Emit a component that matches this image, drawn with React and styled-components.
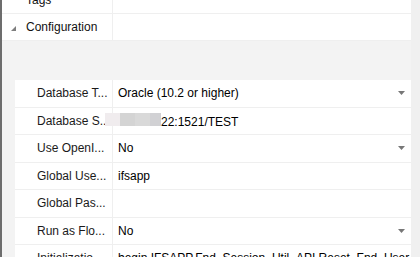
import React from 'react'
import styled, { createGlobalStyle } from 'styled-components'

const GlobalStyle = createGlobalStyle`
  html, body {
    margin: 0;
    padding: 0;
    background: #ffffff;
    overflow: hidden;
  }
  body {
    font-family: "Liberation Sans", Arial, sans-serif;
    font-size: 12px;
    color: #000;
  }
`

const Page = styled.div`
  display: flex;
  width: 420px;
  height: 257px;
  overflow: hidden;
`

const Grid = styled.div`
  flex: 1;
  min-width: 0;
  border-left: 2px solid #6d6d6d;
  background: #f3f3f3;
  overflow: hidden;
  white-space: nowrap;
`

// the grid is scrolled down a little, so the first row is cut off at the top
const Scrolled = styled.div`
  margin-top: -13px;
`

const ScrollTrack = styled.div`
  width: 9px;
  background: #f0f0f0;
`

const CategoryRow = styled.div`
  display: grid;
  grid-template-columns: 111px 1fr;
  height: 27px;
  background: #fff;
  border-bottom: 1px solid #efefef;
  box-sizing: border-box;
`

const CategoryName = styled.div`
  display: flex;
  align-items: center;
  gap: 10px;
  padding-left: 9px;
  border-right: 1px solid #efefef;
  color: #111;
`

const Expander = styled.span`
  display: inline-flex;
  width: 5px;
  height: 5px;
  margin-top: 2px;
  visibility: ${p => (p.$hidden ? 'hidden' : 'visible')};
`

const Gap = styled.div`
  height: 39px;
`

const PropertyList = styled.div`
  padding-left: 13px;
`

const PropRow = styled.div`
  display: grid;
  grid-template-columns: 98px 1fr;
  height: 27.5px;
  background: #fff;
  border-bottom: 1px solid #efefef;
  box-sizing: border-box;
`

const Label = styled.div`
  display: flex;
  align-items: center;
  padding-left: 22px;
  border-right: 1px solid #efefef;
  color: #1a1a1a;
  overflow: hidden;
`

const Value = styled.div`
  display: flex;
  align-items: center;
  justify-content: space-between;
  padding: 0 6px 0 5px;
  color: #000;
`

const Arrow = styled.svg`
  flex: none;
  width: 7px;
  height: 4px;
`

const Redacted = styled.span`
  display: inline-flex;
  height: 13px;
  margin-left: -13px;
  margin-top: 1px;
`

const Block = styled.span`
  width: ${p => p.$w}px;
  background: ${p => p.$c};
`

const Triangle = () => (
  <svg width="5" height="5" viewBox="0 0 5 5">
    <polygon points="5,0 5,5 0,5" fill="#7e7e7e" />
  </svg>
)

const DropArrow = () => (
  <Arrow viewBox="0 0 7 4">
    <polygon points="0,0 7,0 3.5,4" fill="#777" />
  </Arrow>
)

const properties = [
  { label: 'Database T...', value: 'Oracle (10.2 or higher)', combo: true },
  { label: 'Database S...', value: '22:1521/TEST', masked: true },
  { label: 'Use OpenI...', value: 'No', combo: true },
  { label: 'Global Use...', value: 'ifsapp' },
  { label: 'Global Pas...', value: '' },
  { label: 'Run as Flo...', value: 'No', combo: true },
  { label: 'Initializatio...', value: 'begin IFSAPP.Fnd_Session_Util_API.Reset_Fnd_User_;IFSAPP.Fnd_Session_API' },
]

const maskBlocks = [
  { w: 15, c: '#f0ecee' },
  { w: 15, c: '#d4d4d4' },
  { w: 15, c: '#d9d9d9' },
  { w: 11, c: '#d1d1d4' },
]

export default function App() {
  return (
    <>
      <GlobalStyle />
      <Page>
        <Grid>
          <Scrolled>
            <CategoryRow>
              <CategoryName>
                <Expander $hidden><Triangle /></Expander>
                Tags
              </CategoryName>
              <div />
            </CategoryRow>
            <CategoryRow>
              <CategoryName>
                <Expander><Triangle /></Expander>
                Configuration
              </CategoryName>
              <div />
            </CategoryRow>
            <Gap />
            <PropertyList>
              {properties.map(p => (
                <PropRow key={p.label}>
                  <Label>{p.label}</Label>
                  <Value>
                    <span>
                      {p.masked && (
                        <Redacted>
                          {maskBlocks.map((b, i) => (
                            <Block key={i} $w={b.w} $c={b.c} />
                          ))}
                        </Redacted>
                      )}
                      {p.value}
                    </span>
                    {p.combo && <DropArrow />}
                  </Value>
                </PropRow>
              ))}
            </PropertyList>
          </Scrolled>
        </Grid>
        <ScrollTrack />
      </Page>
    </>
  )
}
